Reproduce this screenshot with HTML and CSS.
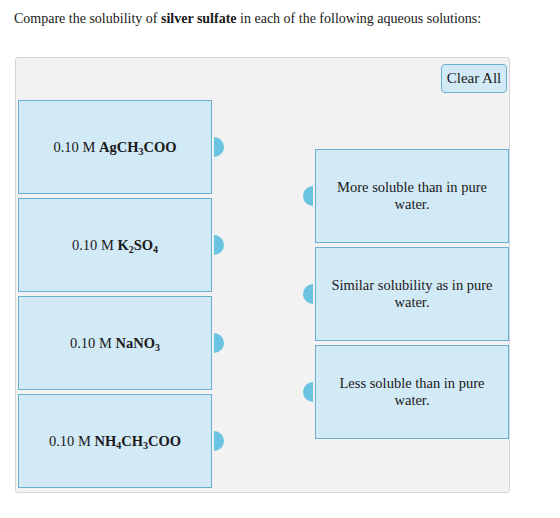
FILE: index.html
```html
<!DOCTYPE html>
<html lang="en">
<head>
  <meta charset="UTF-8">
  <title>Solubility matching</title>
  <link rel="stylesheet" href="styles.css">
</head>
<body>

<p class="question">Compare the solubility of <b>silver sulfate</b> in each of the following aqueous solutions:</p>

<div class="panel">
  <div class="toolbar">
    <button class="clear-button">Clear All</button>
  </div>

  <div class="match">
    <!-- solutions, each with a drag handle on its right -->
    <div class="sources">
      <div class="item">
        <div class="card"><span>0.10 M <b>AgCH<sub>3</sub>COO</b></span></div>
        <span class="knob knob-right"></span>
      </div>
      <div class="item">
        <div class="card"><span>0.10 M <b>K<sub>2</sub>SO<sub>4</sub></b></span></div>
        <span class="knob knob-right"></span>
      </div>
      <div class="item">
        <div class="card"><span>0.10 M <b>NaNO<sub>3</sub></b></span></div>
        <span class="knob knob-right"></span>
      </div>
      <div class="item">
        <div class="card"><span>0.10 M <b>NH<sub>4</sub>CH<sub>3</sub>COO</b></span></div>
        <span class="knob knob-right"></span>
      </div>
    </div>

    <!-- answers, handle on the left -->
    <div class="targets">
      <div class="item">
        <span class="knob knob-left"></span>
        <div class="card card-answer"><span>More soluble than in pure water.</span></div>
      </div>
      <div class="item">
        <span class="knob knob-left"></span>
        <div class="card card-answer"><span>Similar solubility as in pure water.</span></div>
      </div>
      <div class="item">
        <span class="knob knob-left"></span>
        <div class="card card-answer"><span>Less soluble than in pure water.</span></div>
      </div>
    </div>
  </div>
</div>

</body>
</html>
```

FILE: styles.css
```css
* {
  box-sizing: border-box;
}

body {
  margin: 0;
  padding: 0;
  font-family: 'Liberation Serif', 'Times New Roman', serif;
  color: #1a1a1a;
  background-color: white;
}

.question {
  margin: 0;
  padding: 11px 0 0 14px;
  font-size: 14px;
  line-height: 16px;
  height: 57px;
}

.panel {
  margin-left: 15px;
  width: 495px;
  height: 436px;
  padding: 6px 2px 0 2px;
  background-color: #f2f2f2;
  border: 1px solid #d3d6d9;
  border-radius: 3px;
}

.toolbar {
  display: flex;
  justify-content: flex-end;
}

.clear-button {
  width: 66px;
  height: 29px;
  padding: 0;
  font-family: inherit;
  font-size: 15px;
  color: #1a1a1a;
  background-color: #d2e9f6;
  border: 1px solid #6aaed0;
  border-radius: 4px;
  cursor: pointer;
}

.match {
  display: flex;
  margin-top: 7px;
}

.sources,
.targets {
  display: flex;
  flex-direction: column;
  gap: 4px;
}

.targets {
  margin-left: 79px;
  margin-top: 49px;
}

.item {
  display: flex;
  align-items: center;
  gap: 2px;
}

.card {
  width: 194px;
  height: 94px;
  display: flex;
  align-items: center;
  justify-content: center;
  text-align: center;
  font-size: 14.5px;
  line-height: 17px;
  background-color: #d2e9f6;
  border: 1px solid #6aaed0;
}

.card-answer {
  padding: 0 12px;
}

.card sub {
  font-size: 10px;
  line-height: 0;
  vertical-align: -3px;
}

.knob {
  width: 10px;
  height: 20px;
  background-color: #69c3e1;
}

.knob-right {
  border-radius: 0 10px 10px 0;
}

.knob-left {
  border-radius: 10px 0 0 10px;
}
```
